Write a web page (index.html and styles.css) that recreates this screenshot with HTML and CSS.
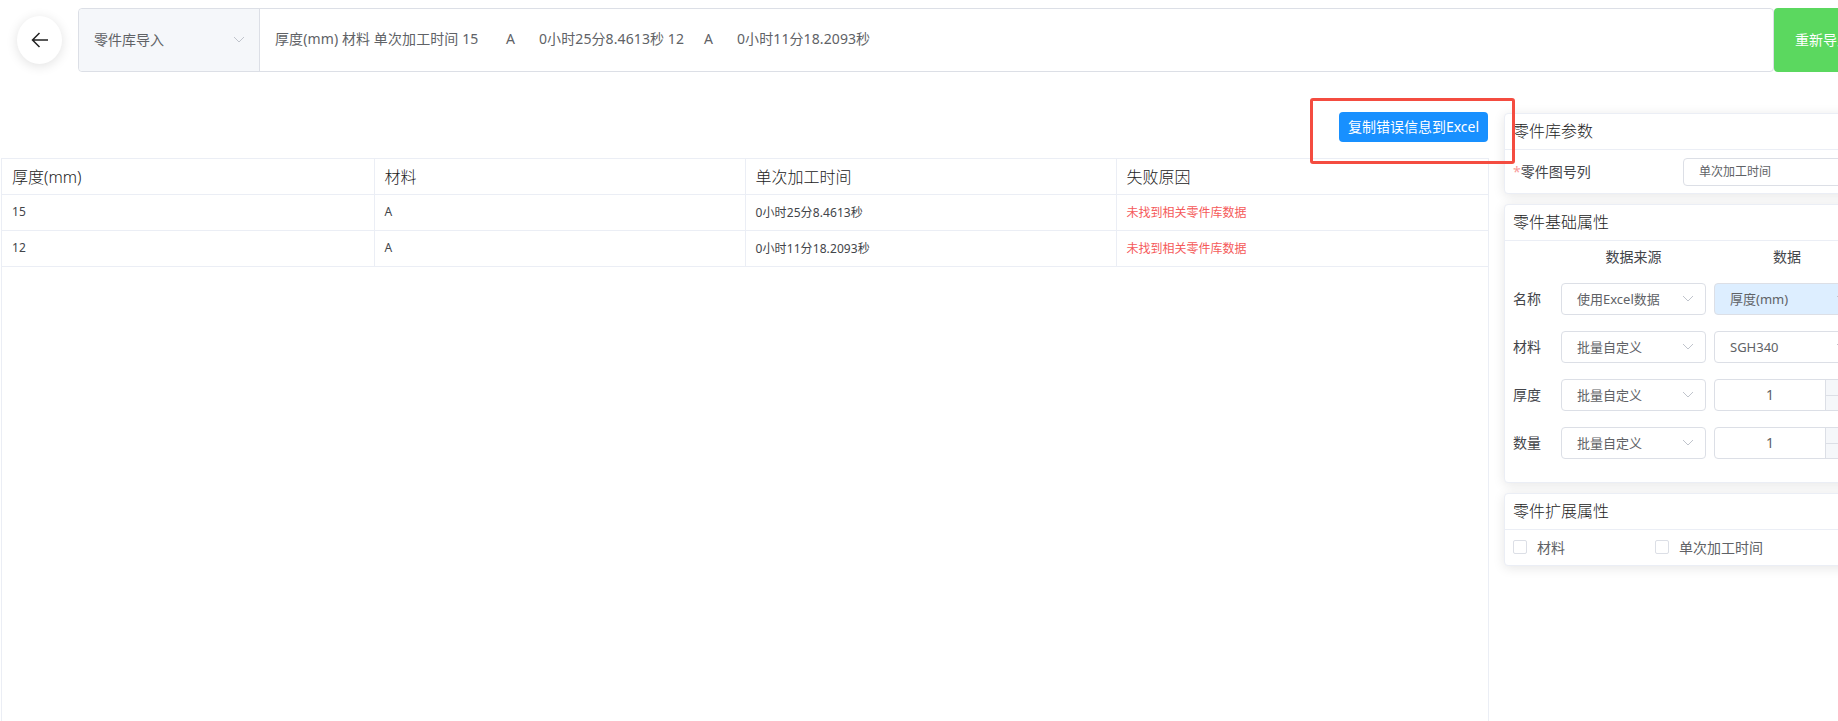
FILE: index.html
```html
<!DOCTYPE html>
<html lang="zh-CN">
<head>
<meta charset="utf-8">
<title>零件库导入</title>
<link rel="stylesheet" href="styles.css">
</head>
<body>
<div class="page">
  <header class="topbar">
    <button class="back" type="button" aria-label="返回">
      <svg class="back-icon" viewBox="0 0 18 16" width="18" height="16"><path d="M17 8H1.5M8.5 1 1.5 8l7 7" fill="none" stroke="#222" stroke-width="1.5"/></svg>
    </button>
    <div class="input-group">
      <div class="prefix">
        <span>零件库导入</span>
        <svg class="chev" viewBox="0 0 12 7" width="12" height="7"><path d="M1 1l5 5 5-5" fill="none" stroke="#c0c4cc"/></svg>
      </div>
      <div class="paste">厚度(mm) 材料 单次加工时间 15&#9;A&#9;0小时25分8.4613秒 12&#9;A&#9;0小时11分18.2093秒</div>
    </div>
    <button class="reimport" type="button">重新导入</button>
  </header>

  <main class="main">
    <section class="left">
      <div class="toolbar">
        <button class="copy" type="button">复制错误信息到Excel</button>
      </div>
      <div class="table-wrap">
        <table class="grid">
          <thead>
            <tr><th class="c1">厚度(mm)</th><th class="c2">材料</th><th class="c3">单次加工时间</th><th class="c4">失败原因</th></tr>
          </thead>
          <tbody>
            <tr><td>15</td><td>A</td><td>0小时25分8.4613秒</td><td class="err">未找到相关零件库数据</td></tr>
            <tr><td>12</td><td>A</td><td>0小时11分18.2093秒</td><td class="err">未找到相关零件库数据</td></tr>
          </tbody>
        </table>
      </div>
    </section>

    <aside class="side">
      <section class="card">
        <h3 class="card-title">零件库参数</h3>
        <div class="param-row">
          <label class="param-label"><span class="req">*</span>零件图号列</label>
          <div class="select param-select">单次加工时间</div>
        </div>
      </section>

      <section class="card">
        <h3 class="card-title">零件基础属性</h3>
        <div class="props">
          <span></span><span class="col-head">数据来源</span><span class="col-head">数据</span>

          <span class="prop-label">名称</span>
          <div class="select">使用Excel数据<svg class="chev" viewBox="0 0 12 7" width="12" height="7"><path d="M1 1l5 5 5-5" fill="none" stroke="#c0c4cc"/></svg></div>
          <div class="select active">厚度(mm)<svg class="chev" viewBox="0 0 12 7" width="12" height="7"><path d="M1 1l5 5 5-5" fill="none" stroke="#c0c4cc"/></svg></div>

          <span class="prop-label">材料</span>
          <div class="select">批量自定义<svg class="chev" viewBox="0 0 12 7" width="12" height="7"><path d="M1 1l5 5 5-5" fill="none" stroke="#c0c4cc"/></svg></div>
          <div class="select">SGH340<svg class="chev" viewBox="0 0 12 7" width="12" height="7"><path d="M1 1l5 5 5-5" fill="none" stroke="#c0c4cc"/></svg></div>

          <span class="prop-label">厚度</span>
          <div class="select">批量自定义<svg class="chev" viewBox="0 0 12 7" width="12" height="7"><path d="M1 1l5 5 5-5" fill="none" stroke="#c0c4cc"/></svg></div>
          <div class="number">
            <span class="num-value">1</span>
            <div class="stepper">
              <span class="step"><svg viewBox="0 0 12 7" width="10" height="6"><path d="M1 6l5-5 5 5" fill="none" stroke="#c0c4cc"/></svg></span>
              <span class="step"><svg viewBox="0 0 12 7" width="10" height="6"><path d="M1 1l5 5 5-5" fill="none" stroke="#c0c4cc"/></svg></span>
            </div>
          </div>

          <span class="prop-label">数量</span>
          <div class="select">批量自定义<svg class="chev" viewBox="0 0 12 7" width="12" height="7"><path d="M1 1l5 5 5-5" fill="none" stroke="#c0c4cc"/></svg></div>
          <div class="number">
            <span class="num-value">1</span>
            <div class="stepper">
              <span class="step"><svg viewBox="0 0 12 7" width="10" height="6"><path d="M1 6l5-5 5 5" fill="none" stroke="#c0c4cc"/></svg></span>
              <span class="step"><svg viewBox="0 0 12 7" width="10" height="6"><path d="M1 1l5 5 5-5" fill="none" stroke="#c0c4cc"/></svg></span>
            </div>
          </div>
        </div>
      </section>

      <section class="card">
        <h3 class="card-title">零件扩展属性</h3>
        <div class="checks">
          <label class="check"><span class="box"></span>材料</label>
          <label class="check"><span class="box"></span>单次加工时间</label>
        </div>
      </section>
    </aside>
  </main>

  <div class="annotation"></div>
</div>
</body>
</html>
```

FILE: styles.css
```css
* { box-sizing: border-box; }

html, body {
  margin: 0;
  height: 100%;
  overflow: hidden;
  background: #fff;
}

body {
  font-family: "Noto Sans", "Noto Sans CJK SC", sans-serif;
  font-size: 14px;
  font-weight: 400;
  color: #43454a;
}

.page {
  position: relative;
  width: 1838px;
  height: 721px;
  overflow: hidden;
  display: flex;
  flex-direction: column;
}

/* top bar */
.topbar {
  display: flex;
  align-items: flex-start;
  flex: none;
  width: 1960px;
  height: 72px;
  padding: 8px 0 0 17px;
}

.back {
  flex: none;
  width: 45px;
  height: 48px;
  margin-top: 8px;
  padding: 0;
  border: 0;
  border-radius: 50%;
  background: #fff;
  box-shadow: 0 2px 12px rgba(0, 0, 0, .12);
  display: flex;
  align-items: center;
  justify-content: center;
}

.input-group {
  flex: none;
  display: flex;
  width: 1696px;
  height: 64px;
  margin-left: 16px;
  border: 1px solid #dcdfe6;
  border-radius: 4px;
  color: #606266;
}

.prefix {
  flex: none;
  width: 181px;
  display: flex;
  align-items: center;
  justify-content: space-between;
  padding: 0 14px 2px 15px;
  background: #f5f7fa;
  border-right: 1px solid #dcdfe6;
  border-radius: 4px 0 0 4px;
}

.paste {
  flex: 1;
  padding-left: 15px;
  line-height: 60px;
  white-space: pre;
  tab-size: 33px;
  letter-spacing: .1px;
}

.reimport {
  flex: none;
  width: 120px;
  height: 64px;
  padding: 0 0 2px 21px;
  margin: 0;
  border: 0;
  border-radius: 4px;
  background: #5bd85f;
  color: #fff;
  font: inherit;
  text-align: left;
}

/* main area */
.main {
  flex: 1;
  min-height: 0;
  display: flex;
  width: 1960px;
}

.left {
  flex: none;
  width: 1489px;
  padding-left: 1px;
  display: flex;
  flex-direction: column;
}

.toolbar {
  flex: none;
  height: 86px;
  padding-top: 40px;
  display: flex;
  justify-content: flex-end;
}

.copy {
  width: 149px;
  height: 30px;
  margin-right: 1px;
  padding: 0 0 2px;
  border: 0;
  border-radius: 4px;
  background: #1890ff;
  color: #fff;
  font: inherit;
  white-space: nowrap;
}

.table-wrap {
  flex: 1;
  border-left: 1px solid #ebeef5;
  border-right: 1px solid #ebeef5;
}

.grid {
  width: 100%;
  table-layout: fixed;
  border-collapse: collapse;
}

.grid th, .grid td {
  height: 36px;
  padding: 0 10px 1px;
  text-align: left;
  border: 1px solid #ebeef5;
}

.grid tr > :first-child { border-left: 0; }
.grid tr > :last-child { border-right: 0; }

.grid th { font-size: 16px; font-weight: 300; color: #222; padding-bottom: 2px; }
.grid td { font-size: 12px; padding-bottom: 2px; letter-spacing: .1px; }

.c1 { width: 372px; }
.c2 { width: 371px; }
.c3 { width: 371px; }

.grid .err { color: #f55a5a; letter-spacing: 0; }

/* side panel */
.side {
  flex: none;
  width: 420px;
  margin-left: 15px;
  padding-top: 41px;
  display: flex;
  flex-direction: column;
  gap: 10px;
}

.card {
  border: 1px solid #ebeef5;
  border-radius: 4px;
  background: #fff;
  box-shadow: 0 2px 12px rgba(0, 0, 0, .1);
}

.card-title {
  margin: 0;
  height: 36px;
  padding-left: 8px;
  font-size: 16px;
  font-weight: 300;
  color: #222;
  line-height: 35px;
  border-bottom: 1px solid #ebeef5;
}

.param-row {
  display: flex;
  align-items: center;
  height: 43px;
  padding-left: 8px;
}

.param-label { width: 170px; flex: none; padding-bottom: 1px; }
.req { color: #f89a9a; }

.select {
  position: relative;
  display: flex;
  align-items: center;
  justify-content: space-between;
  height: 32px;
  padding: 0 11px 1px 15px;
  border: 1px solid #dcdfe6;
  border-radius: 4px;
  background: #fff;
  color: #606266;
  font-size: 13px;
  white-space: nowrap;
}

.select.active { background: #ddeeff; }

.param-select {
  flex: none;
  width: 200px;
  height: 28px;
  font-size: 12px;
}

.props {
  display: grid;
  grid-template-columns: 40px 145px 146px;
  grid-template-rows: 26px repeat(4, 32px);
  column-gap: 8px;
  row-gap: 16px;
  align-items: center;
  padding: 0 0 23px 8px;
}

.col-head {
  align-self: end;
  text-align: center;
  line-height: 20px;
}

.prop-label { padding-bottom: 2px; }

.number {
  display: flex;
  height: 32px;
  border: 1px solid #dcdfe6;
  border-radius: 4px;
  color: #606266;
}

.num-value {
  flex: 1;
  text-align: center;
  line-height: 29px;
}

.stepper {
  flex: none;
  width: 34px;
  display: flex;
  flex-direction: column;
  background: #f5f7fa;
  border-left: 1px solid #dcdfe6;
}

.step {
  flex: 1;
  display: flex;
  align-items: center;
  justify-content: center;
}

.step + .step { border-top: 1px solid #dcdfe6; }

.checks {
  display: flex;
  height: 35px;
  align-items: center;
  padding: 0 0 2px 8px;
}

.check {
  width: 142px;
  display: flex;
  align-items: center;
  gap: 10px;
  color: #606266;
}

.box {
  flex: none;
  width: 14px;
  height: 14px;
  border: 1px solid #dcdfe6;
  border-radius: 2px;
  background: #fff;
}

/* hand-drawn annotation over the screenshot */
.annotation {
  position: absolute;
  left: 1310px;
  top: 98px;
  width: 205px;
  height: 66px;
  border: 3px solid #f44c40;
  border-radius: 3px;
  pointer-events: none;
}
```
